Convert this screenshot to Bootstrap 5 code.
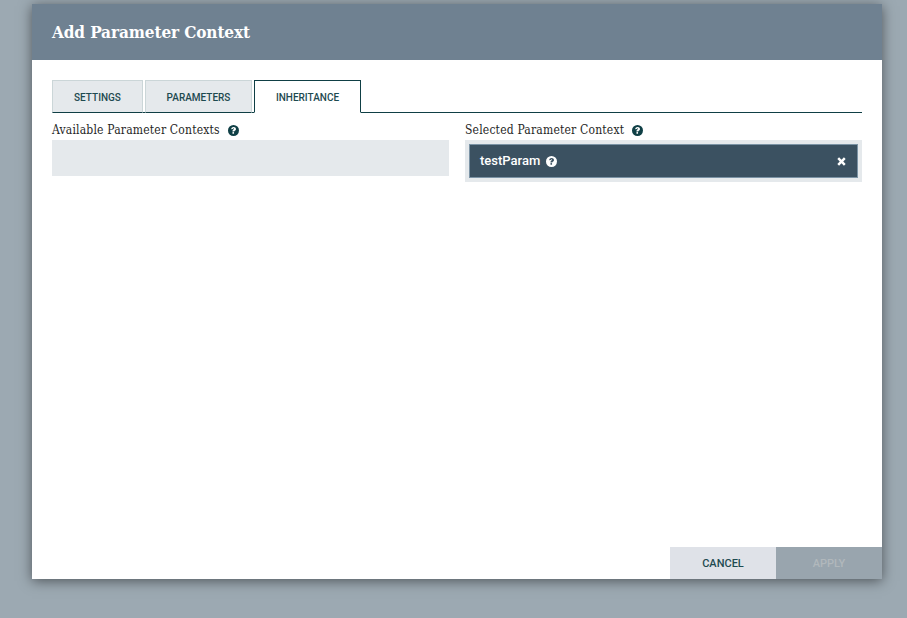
<!DOCTYPE html>
<html lang="en">
<head>
<meta charset="utf-8">
<title>Add Parameter Context</title>
<link href="https://cdn.jsdelivr.net/npm/bootstrap@5.3.0/dist/css/bootstrap.min.css" rel="stylesheet">
<style>
html,body{height:100%;overflow:hidden}
body{background:#9ca9b2;font-family:"Roboto",sans-serif;color:#262626}
.pdlg{width:850px;height:575px;margin:4px 0 0 32px;background:#fff;box-shadow:0 2px 12px rgba(0,0,0,.5)}
.pdlg-head{height:56px;padding:2px 20px 0;background:#6f8191;color:#fff;font-family:"DejaVu Serif Condensed","DejaVu Serif",serif;font-weight:700;font-size:17px;letter-spacing:-.1px}
.pdlg-body{padding:20px 20px 0}
.ptabs{height:33px;border-bottom:1px solid #0f3f45;gap:2px}
.ptab{height:33px;border:1px solid #cbd6d8;border-bottom:1px solid #0f3f45;background:#e5e9ec;color:#1e4a50;font-size:10px;font-weight:500;padding:2px 0 0;text-transform:uppercase}
.ptab-a{width:91px}.ptab-b{width:107px}
.ptab-c{width:107px;background:#fff;border:1px solid #0f3f45;border-bottom-color:#fff}
.pcols{margin-top:10px;gap:16px}
.pcol{width:397px}
.plabel{font-family:"DejaVu Serif Condensed","DejaVu Serif",serif;font-size:12px;letter-spacing:.19px;line-height:14px;height:17px;color:#262626;gap:8px}
.phelp{width:11px;height:11px;flex:none}
.plabel .phelp{margin-top:2px}
.pempty{height:36px;background:#e5e9ec}
.psel{padding:4px 4px 3px;background:#e5e9ec;height:42px}
.pitem{height:34px;padding:0 10px;background:#3b5161;border:1px solid #7b93a5;color:#fff;font-size:13px;font-weight:500}
.pitem-name{margin-right:6px}
.pclose{width:9px;height:9px;margin-right:1px}
.pfoot{height:32px;margin-top:365px;margin-right:-20px}
.pbtn{width:106px;height:32px;border:0;border-radius:0;font-size:11px;font-weight:500;padding:2px 0 0}
.pbtn-c{background:#dfe2e8;color:#1e4a50}
.pbtn-a{background:#99a5ae;color:#b1b8bc}
</style>
</head>
<body>
<div class="pdlg d-flex flex-column">
  <div class="pdlg-head d-flex align-items-center">Add Parameter Context</div>
  <div class="pdlg-body flex-grow-1 d-flex flex-column">
    <div class="ptabs d-flex">
      <button class="ptab ptab-a" type="button">Settings</button>
      <button class="ptab ptab-b" type="button">Parameters</button>
      <button class="ptab ptab-c" type="button">Inheritance</button>
    </div>
    <div class="pcols d-flex">
      <div class="pcol">
        <div class="plabel d-flex align-items-start"><span>Available Parameter Contexts</span>
          <svg class="phelp" viewBox="0 0 16 16"><circle cx="8" cy="8" r="8" fill="#0f3f45"/><path d="M4.600 6.100C4.800 4 6.300 2.800 8.200 2.800c2 0 3.400 1.200 3.400 2.900 0 1.400-.8 2-1.600 2.500-.6.4-.8.600-.8 1.200H6.500c0-1.500.5-2.200 1.400-2.800.6-.4.9-.6.9-1 0-.4-.3-.7-.8-.7-.6 0-.9.300-1 .9z" fill="#fff"/><rect x="6.500" y="10.300" width="2.300" height="2.400" fill="#fff"/></svg>
        </div>
        <div class="pempty"></div>
      </div>
      <div class="pcol">
        <div class="plabel d-flex align-items-start"><span>Selected Parameter Context</span>
          <svg class="phelp" viewBox="0 0 16 16"><circle cx="8" cy="8" r="8" fill="#0f3f45"/><path d="M4.600 6.100C4.800 4 6.300 2.800 8.200 2.800c2 0 3.400 1.200 3.400 2.900 0 1.400-.8 2-1.600 2.500-.6.4-.8.600-.8 1.200H6.500c0-1.500.5-2.200 1.400-2.800.6-.4.9-.6.9-1 0-.4-.3-.7-.8-.7-.6 0-.9.300-1 .9z" fill="#fff"/><rect x="6.500" y="10.300" width="2.300" height="2.400" fill="#fff"/></svg>
        </div>
        <div class="psel">
          <div class="pitem d-flex align-items-center">
            <span class="pitem-name">testParam</span>
            <svg class="phelp" viewBox="0 0 16 16"><circle cx="8" cy="8" r="8" fill="#fff"/><path d="M4.600 6.100C4.800 4 6.300 2.800 8.200 2.800c2 0 3.400 1.200 3.400 2.900 0 1.400-.8 2-1.600 2.500-.6.4-.8.600-.8 1.200H6.500c0-1.500.5-2.200 1.400-2.800.6-.4.9-.6.9-1 0-.4-.3-.7-.8-.7-.6 0-.9.300-1 .9z" fill="#3b5161"/><rect x="6.500" y="10.300" width="2.300" height="2.400" fill="#3b5161"/></svg>
            <svg class="pclose ms-auto" viewBox="0 0 16 16"><path d="M3.700.6 8 4.900 12.300.6l3.100 3.100L11.100 8l4.300 4.300-3.100 3.100L8 11.100l-4.300 4.300-3.100-3.100L4.900 8 .6 3.700z" fill="#fff"/></svg>
          </div>
        </div>
      </div>
    </div>
    <div class="pfoot d-flex justify-content-end">
      <button class="pbtn pbtn-c" type="button">CANCEL</button>
      <button class="pbtn pbtn-a" type="button">APPLY</button>
    </div>
  </div>
</div>
<script src="https://cdn.jsdelivr.net/npm/bootstrap@5.3.0/dist/js/bootstrap.bundle.min.js"></script>
</body>
</html>
